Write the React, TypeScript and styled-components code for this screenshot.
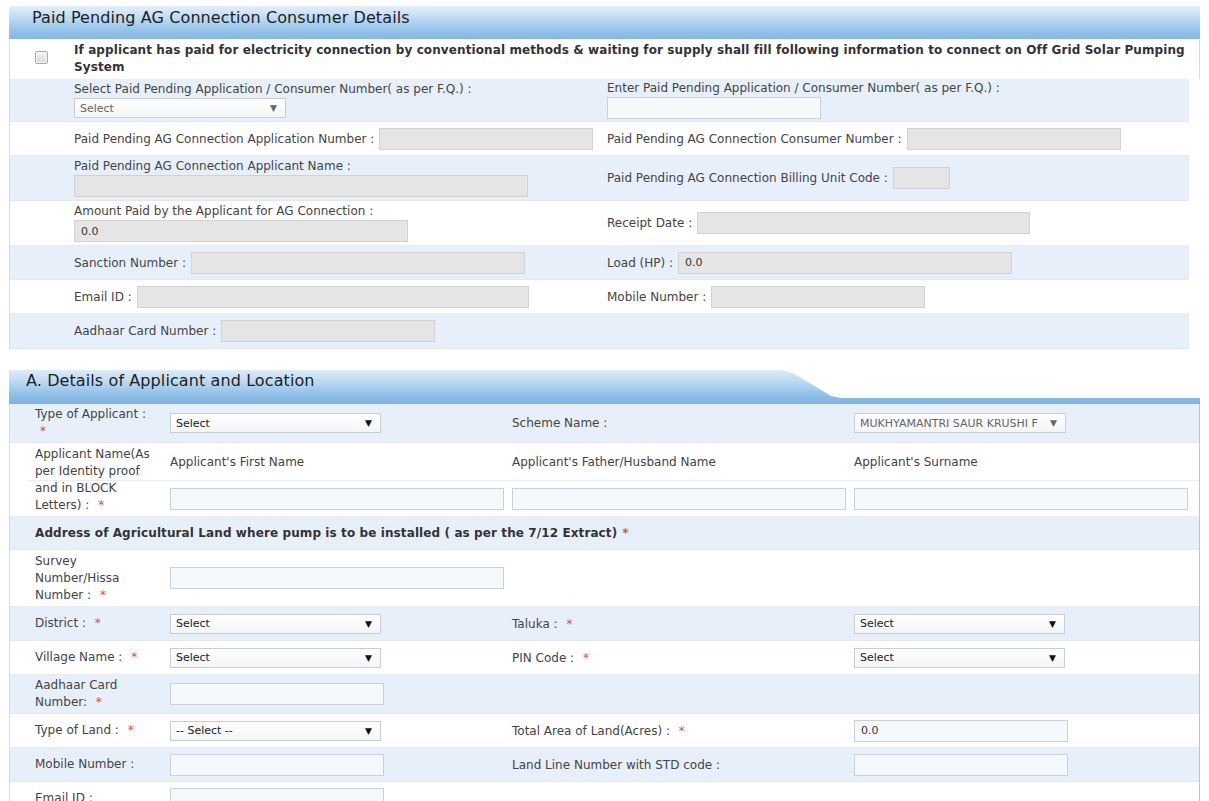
import React from 'react';
import styled, { createGlobalStyle } from 'styled-components';

const GlobalStyle = createGlobalStyle`
  html, body { margin: 0; padding: 0; background: #ffffff; }
  body {
    font-family: "DejaVu Sans", Tahoma, sans-serif;
    font-size: 12px;
    color: #444;
  }
  * { box-sizing: border-box; }
`;

const Page = styled.div`
  width: 1209px;
  height: 801px;
  overflow: hidden;
  padding: 6px 9px 0 9px;
`;

/* ---------- Section 1 ---------- */

const PlainHeader = styled.div`
  height: 33px;
  display: flex;
  align-items: flex-start;
  padding: 2px 0 0 23px;
  background: linear-gradient(#e3eff9 0%, #c0dcf3 35%, #93c2e8 75%, #84b8e3 100%);
  border-top-left-radius: 3px;
  font-size: 16px;
  letter-spacing: 0.1px;
  color: #1e1e1e;
`;

const Panel = styled.div`
  border-left: 1px solid #dcdcdc;
`;

const CheckRow = styled.div`
  height: 40px;
  display: grid;
  grid-template-columns: 55px 1fr;
  align-items: center;
  border-right: 1px solid #dcdcdc;
`;

const CheckBox = styled.span`
  justify-self: center;
  margin-left: 8px;
  margin-bottom: 4px;
  width: 13px;
  height: 13px;
  border: 1px solid #a8a8a8;
  border-radius: 2px;
  background: linear-gradient(#f4f4f4, #d9d9d9);
  box-shadow: inset 0 0 0 1px #f8f8f8;
`;

const BoldText = styled.div`
  font-weight: bold;
  font-size: 12px;
  color: #333;
  line-height: 17px;
  padding: 0 8px 0 9px;
  letter-spacing: 0.1px;
`;

const Grid3 = styled.div<{ $alt?: boolean; $h: number }>`
  width: 1179px;
  height: ${(p) => p.$h}px;
  display: grid;
  grid-template-columns: 55px 533px 1fr;
  background: ${(p) => (p.$alt ? '#e7f0fa' : '#ffffff')};
  border-bottom: 1px solid ${(p) => (p.$alt ? '#e2e8ee' : '#e9edf1')};
`;

const Cell = styled.div<{ $stack?: boolean }>`
  padding-left: 9px;
  display: flex;
  flex-direction: ${(p) => (p.$stack ? 'column' : 'row')};
  align-items: ${(p) => (p.$stack ? 'flex-start' : 'center')};
  justify-content: ${(p) => (p.$stack ? 'center' : 'flex-start')};
  gap: ${(p) => (p.$stack ? '2px' : '5px')};
`;

const Label = styled.span`
  white-space: nowrap;
  color: #444;
`;

const DisabledInput = styled.div<{ $w: number }>`
  width: ${(p) => p.$w}px;
  height: 22px;
  background: #e5e5e5;
  border: 1px solid #d2d2d2;
  font-size: 11px;
  color: #333;
  padding-left: 6px;
  display: flex;
  align-items: center;
`;

const TextInput = styled.div<{ $w: number }>`
  width: ${(p) => p.$w}px;
  height: 22px;
  background: #f6f9fc;
  border: 1px solid #c8d2dc;
  font-size: 11px;
  color: #333;
  padding-left: 6px;
  display: flex;
  align-items: center;
`;

const SmallSelect = styled.div<{ $w: number; $muted?: boolean }>`
  width: ${(p) => p.$w}px;
  height: 20px;
  background: linear-gradient(#ffffff, #f3f5f7);
  border: 1px solid #c9ccd0;
  display: flex;
  align-items: center;
  justify-content: space-between;
  padding: 0 8px 0 5px;
  font-size: 11px;
  color: ${(p) => (p.$muted ? '#666' : '#222')};
`;

const Arrow = styled.span<{ $muted?: boolean }>`
  font-size: 9px;
  color: ${(p) => (p.$muted ? '#666' : '#111')};
`;

/* ---------- Section 2 ---------- */

const TabHeader = styled.div`
  margin-top: 21px;
  height: 34px;
  padding: 1px 0 0 17px;
  font-size: 16px;
  letter-spacing: 0.1px;
  color: #1e1e1e;
  background: linear-gradient(#dcebf8 0%, #bcd9f2 35%, #90c0e7 72%, #7eb2df 100%);
  clip-path: polygon(0 0, 772px 0, 784px 3px, 822px 26px, 832px 28px, 100% 28px, 100% 100%, 0 100%);
`;

const Panel2 = styled.div`
  border-left: 1px solid #dcdcdc;
  border-right: 1px solid #c4c4c4;
`;

const Grid4 = styled.div<{ $alt?: boolean; $h: number }>`
  height: ${(p) => p.$h}px;
  display: grid;
  grid-template-columns: 152px 342px 342px 1fr;
  background: ${(p) => (p.$alt ? '#e7f0fa' : '#ffffff')};
  border-bottom: 1px solid ${(p) => (p.$alt ? '#e2e8ee' : '#e9edf1')};
`;

const NameGrid = styled.div`
  height: 74px;
  display: grid;
  grid-template-columns: 152px 342px 342px 1fr;
  grid-template-rows: 38px 36px;
  background: #ffffff;
  border-bottom: 1px solid #e9edf1;
`;

const LabelCell = styled.div<{ $span?: boolean }>`
  padding-left: 25px;
  line-height: 17px;
  display: flex;
  align-items: center;
  position: relative;
  ${(p) => (p.$span ? 'grid-row: 1 / span 2;' : '')}
`;

const SubLine = styled.span`
  position: absolute;
  left: 18px;
  right: 0;
  top: 37px;
  border-top: 1px solid #e9edf1;
`;

const ValueCell = styled.div<{ $line?: boolean }>`
  padding-left: 8px;
  display: flex;
  align-items: center;
  ${(p) => (p.$line ? 'border-bottom: 1px solid #e9edf1;' : '')}
`;

const FullCell = styled.div`
  grid-column: 1 / -1;
  padding-left: 25px;
  display: flex;
  align-items: center;
  font-weight: bold;
  font-size: 12px;
  color: #333;
  letter-spacing: 0.1px;
`;

const Req = styled.span`
  color: #e04a4f;
  margin-left: 5px;
  font-size: 12px;
`;

const Star = () => <Req>*</Req>;

const Sel = ({ text, w = 211, muted }: { text: string; w?: number; muted?: boolean }) => (
  <SmallSelect $w={w} $muted={muted}>
    <span>{text}</span>
    <Arrow $muted={muted}>▼</Arrow>
  </SmallSelect>
);

export default function App() {
  return (
    <Page>
      <GlobalStyle />

      <PlainHeader>Paid Pending AG Connection Consumer Details</PlainHeader>
      <Panel>
        <CheckRow>
          <CheckBox />
          <BoldText>
            If applicant has paid for electricity connection by conventional methods &amp; waiting for supply shall fill following information to connect on Off Grid Solar Pumping System
          </BoldText>
        </CheckRow>

        <Grid3 $alt $h={43}>
          <div />
          <Cell $stack>
            <Label>Select Paid Pending Application / Consumer Number( as per F.Q.) :</Label>
            <Sel text="Select" w={212} muted />
          </Cell>
          <Cell $stack>
            <Label>Enter Paid Pending Application / Consumer Number( as per F.Q.) :</Label>
            <TextInput $w={214} />
          </Cell>
        </Grid3>

        <Grid3 $h={34}>
          <div />
          <Cell>
            <Label>Paid Pending AG Connection Application Number :</Label>
            <DisabledInput $w={214} />
          </Cell>
          <Cell>
            <Label>Paid Pending AG Connection Consumer Number :</Label>
            <DisabledInput $w={214} />
          </Cell>
        </Grid3>

        <Grid3 $alt $h={45}>
          <div />
          <Cell $stack>
            <Label>Paid Pending AG Connection Applicant Name :</Label>
            <DisabledInput $w={454} />
          </Cell>
          <Cell>
            <Label>Paid Pending AG Connection Billing Unit Code :</Label>
            <DisabledInput $w={57} />
          </Cell>
        </Grid3>

        <Grid3 $h={45}>
          <div />
          <Cell $stack>
            <Label>Amount Paid by the Applicant for AG Connection :</Label>
            <DisabledInput $w={334}>0.0</DisabledInput>
          </Cell>
          <Cell>
            <Label>Receipt Date :</Label>
            <DisabledInput $w={333} />
          </Cell>
        </Grid3>

        <Grid3 $alt $h={34}>
          <div />
          <Cell>
            <Label>Sanction Number :</Label>
            <DisabledInput $w={334} />
          </Cell>
          <Cell>
            <Label>Load (HP) :</Label>
            <DisabledInput $w={334}>0.0</DisabledInput>
          </Cell>
        </Grid3>

        <Grid3 $h={34}>
          <div />
          <Cell>
            <Label>Email ID :</Label>
            <DisabledInput $w={392} />
          </Cell>
          <Cell>
            <Label>Mobile Number :</Label>
            <DisabledInput $w={214} />
          </Cell>
        </Grid3>

        <Grid3 $alt $h={35}>
          <div />
          <Cell>
            <Label>Aadhaar Card Number :</Label>
            <DisabledInput $w={214} />
          </Cell>
          <div />
        </Grid3>
      </Panel>

      <TabHeader>A. Details of Applicant and Location</TabHeader>
      <Panel2>
        <Grid4 $alt $h={39}>
          <LabelCell>
            <span>
              Type of Applicant :<br />
              <Req>*</Req>
            </span>
          </LabelCell>
          <ValueCell>
            <Sel text="Select" />
          </ValueCell>
          <ValueCell>
            <Label>Scheme Name :</Label>
          </ValueCell>
          <ValueCell>
            <Sel text="MUKHYAMANTRI SAUR KRUSHI F" w={212} muted />
          </ValueCell>
        </Grid4>

        <NameGrid>
          <LabelCell $span>
            <SubLine />
            <span>
              Applicant Name(As
              <br />
              per Identity proof
              <br />
              and in BLOCK
              <br />
              Letters) : <Star />
            </span>
          </LabelCell>
          <ValueCell $line>
            <Label>Applicant's First Name</Label>
          </ValueCell>
          <ValueCell $line>
            <Label>Applicant's Father/Husband Name</Label>
          </ValueCell>
          <ValueCell $line>
            <Label>Applicant's Surname</Label>
          </ValueCell>
          <ValueCell>
            <TextInput $w={334} />
          </ValueCell>
          <ValueCell>
            <TextInput $w={334} />
          </ValueCell>
          <ValueCell>
            <TextInput $w={334} />
          </ValueCell>
        </NameGrid>

        <Grid4 $alt $h={33}>
          <FullCell>
            Address of Agricultural Land where pump is to be installed ( as per the 7/12 Extract)
            <Star />
          </FullCell>
        </Grid4>

        <Grid4 $h={57}>
          <LabelCell>
            <span>
              Survey
              <br />
              Number/Hissa
              <br />
              Number : <Star />
            </span>
          </LabelCell>
          <ValueCell>
            <TextInput $w={334} />
          </ValueCell>
        </Grid4>

        <Grid4 $alt $h={34}>
          <LabelCell>
            <span>
              District : <Star />
            </span>
          </LabelCell>
          <ValueCell>
            <Sel text="Select" />
          </ValueCell>
          <ValueCell>
            <Label>
              Taluka : <Star />
            </Label>
          </ValueCell>
          <ValueCell>
            <Sel text="Select" />
          </ValueCell>
        </Grid4>

        <Grid4 $h={34}>
          <LabelCell>
            <span>
              Village Name : <Star />
            </span>
          </LabelCell>
          <ValueCell>
            <Sel text="Select" />
          </ValueCell>
          <ValueCell>
            <Label>
              PIN Code : <Star />
            </Label>
          </ValueCell>
          <ValueCell>
            <Sel text="Select" />
          </ValueCell>
        </Grid4>

        <Grid4 $alt $h={39}>
          <LabelCell>
            <span>
              Aadhaar Card
              <br />
              Number: <Star />
            </span>
          </LabelCell>
          <ValueCell>
            <TextInput $w={214} />
          </ValueCell>
        </Grid4>

        <Grid4 $h={34}>
          <LabelCell>
            <span>
              Type of Land : <Star />
            </span>
          </LabelCell>
          <ValueCell>
            <Sel text="-- Select --" />
          </ValueCell>
          <ValueCell>
            <Label>
              Total Area of Land(Acres) : <Star />
            </Label>
          </ValueCell>
          <ValueCell>
            <TextInput $w={214}>0.0</TextInput>
          </ValueCell>
        </Grid4>

        <Grid4 $alt $h={34}>
          <LabelCell>
            <span>Mobile Number :</span>
          </LabelCell>
          <ValueCell>
            <TextInput $w={214} />
          </ValueCell>
          <ValueCell>
            <Label>Land Line Number with STD code :</Label>
          </ValueCell>
          <ValueCell>
            <TextInput $w={214} />
          </ValueCell>
        </Grid4>

        <Grid4 $h={34}>
          <LabelCell>
            <span>Email ID :</span>
          </LabelCell>
          <ValueCell>
            <TextInput $w={214} />
          </ValueCell>
        </Grid4>
      </Panel2>
    </Page>
  );
}
